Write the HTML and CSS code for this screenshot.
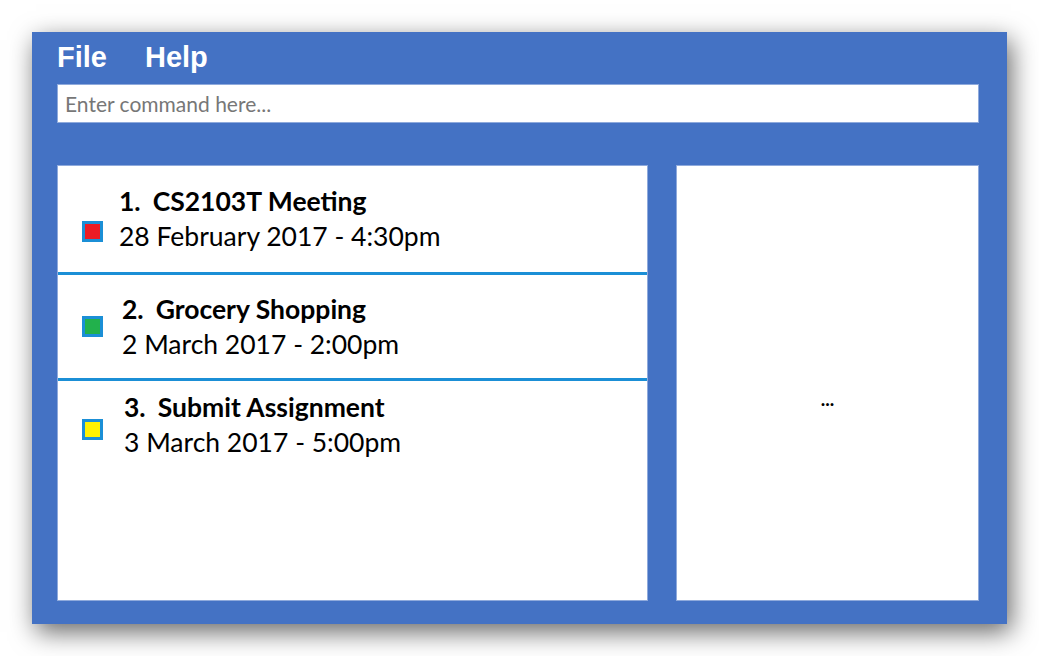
FILE: index.html
```html
<!DOCTYPE html>
<html>
	<head>
		<meta charset="utf-8">
		<title>Task Manager</title>
		<link rel="stylesheet" href="styles.css">
	</head>
	<body>
		<div class="window">
			<div class="menubar">
				<a class="menu">File</a>
				<a class="menu">Help</a>
			</div>
			<div class="command">Enter command here...</div>
			<div class="main">
				<div class="tasklist">
					<div class="task first">
						<span class="tag red"></span>
						<div class="info">
							<div class="name"><span class="num">1.</span>CS2103T Meeting</div>
							<div class="date">28 February 2017 - 4:30pm</div>
						</div>
					</div>
					<div class="task second">
						<span class="tag green"></span>
						<div class="info">
							<div class="name"><span class="num">2.</span>Grocery Shopping</div>
							<div class="date">2 March 2017 - 2:00pm</div>
						</div>
					</div>
					<div class="task third">
						<span class="tag yellow"></span>
						<div class="info">
							<div class="name"><span class="num">3.</span>Submit Assignment</div>
							<div class="date">3 March 2017 - 5:00pm</div>
						</div>
					</div>
				</div>
				<div class="detail">...</div>
			</div>
		</div>
	</body>
</html>
```

FILE: styles.css
```css
body {
	margin: 0;
	padding: 32px 0 32px 32px;
	background-color: white;
	font-family: "Lato", "Liberation Sans", sans-serif;
}

.window {
	width: 975px;
	height: 592px;
	box-sizing: border-box;
	padding: 0 28px 23px 25px;
	background-color: #4472c4;
	box-shadow: 4px 8px 24px rgba(0, 0, 0, 0.6);
	display: flex;
	flex-direction: column;
}

.menubar {
	height: 52px;
	display: flex;
	align-items: center;
	gap: 38px;
	font-family: "Liberation Sans", Arial, sans-serif;
	font-weight: bold;
	font-size: 29px;
	color: white;
	padding-bottom: 2px;
	box-sizing: border-box;
}

.command {
	height: 39px;
	background-color: white;
	border: 1px solid #8faadc;
	box-sizing: border-box;
	padding-left: 7px;
	line-height: 37px;
	font-size: 21px;
	color: #777;
}

.main {
	flex: 1;
	margin-top: 42px;
	display: flex;
	gap: 28px;
}

.tasklist {
	width: 591px;
	background-color: white;
	border: 1px solid #8faadc;
	box-sizing: border-box;
}

.detail {
	flex: 1;
	background-color: white;
	border: 1px solid #8faadc;
	box-sizing: border-box;
	text-align: center;
	padding-top: 228px;
	font-size: 19px;
	font-weight: bold;
	line-height: 10px;
}

.task {
	display: flex;
	align-items: center;
	padding-left: 24px;
	border-bottom: 3px solid #1b8fd6;
}

.task.first {
	height: 106px;
}

.task.second {
	height: 103px;
}

.task.third {
	border-bottom: none;
	align-items: flex-start;
	padding-top: 9px;
}

.tag {
	width: 21px;
	height: 21px;
	box-sizing: border-box;
	border: 3px solid #1b8fd6;
	margin-right: 16px;
}

.first .tag {
	margin-top: 24px;
}

.third .tag {
	margin-top: 29px;
}

.second .info {
	padding-left: 3px;
}

.third .info {
	padding-left: 5px;
}

.red {
	background-color: #ec1c24;
}

.green {
	background-color: #22b14c;
}

.yellow {
	background-color: #fff200;
}

.name {
	font-weight: bold;
	font-size: 26.5px;
	line-height: 35px;
	color: black;
}

.num {
	margin-right: 12px;
}

.date {
	font-size: 26.5px;
	line-height: 35px;
	color: black;
}
```
